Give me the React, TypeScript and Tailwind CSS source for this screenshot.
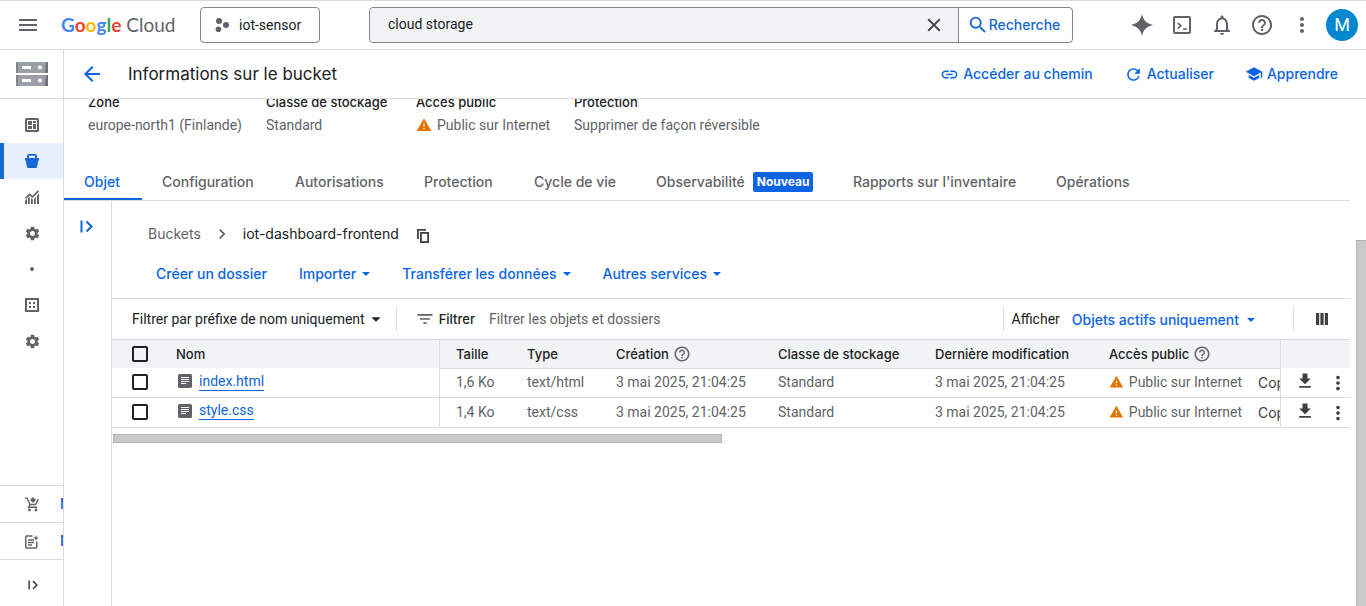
import type { ReactNode } from "react";
import {
  MdArrowBack,
  MdArrowDropDown,
  MdChevronRight,
  MdClose,
  MdDownload,
  MdFilterList,
  MdHelpOutline,
  MdLink,
  MdMenu,
  MdMoreVert,
  MdOutlineNotifications,
  MdRefresh,
  MdSchool,
  MdSearch,
  MdSettings,
  MdWarning,
} from "react-icons/md";

const body = "font-[Roboto,sans-serif]";

function ProjectIcon() {
  return (
    <svg width="14" height="14" viewBox="0 0 14 14" fill="#5f6368" aria-hidden="true">
      <circle cx="4" cy="3" r="3" />
      <circle cx="11" cy="7" r="3" />
      <circle cx="3.4" cy="11.2" r="2.8" />
    </svg>
  );
}

function StorageIcon() {
  return (
    <svg width="32" height="24" viewBox="0 0 32 24" aria-hidden="true">
      <path fill="#9aa0a6" d="M0 0h32v11H0zM0 13h32v11H0z" />
      <path fill="#80868b" d="M0 0h2v11H0zM0 13h2v11H0z" />
      <path fill="#6d7278" d="M30 0h2v11h-3zM30 13h2v11h-3z" />
      <path fill="#fff" d="M6 4h9v3H6zM6 17h9v3H6z" />
      <circle cx="24" cy="5.5" r="2" fill="#fff" />
      <circle cx="24" cy="18.5" r="2" fill="#fff" />
    </svg>
  );
}

function OverviewIcon() {
  return (
    <svg width="14" height="14" viewBox="0 0 14 14" aria-hidden="true">
      <rect x="1" y="1" width="12" height="12" fill="none" stroke="#5f6368" strokeWidth="2" rx=".5" />
      <path fill="#5f6368" d="M3 3h4v4H3zM8 3h3v2H8zM3 8h4v3H3zM8 6h3v5H8z" />
    </svg>
  );
}

function BucketIcon() {
  return (
    <svg width="14" height="14" viewBox="0 0 14 14" fill="#1967d2" aria-hidden="true">
      <path
        fillRule="evenodd"
        d="M4 0h6a2 2 0 0 1 2 2v2h2v2.500h-.6L12 13a1 1 0 0 1-1 1H3a1 1 0 0 1-1-1L.6 6.500H0V4h2V2a2 2 0 0 1 2-2zm0 1.800V4h6V1.800z"
      />
    </svg>
  );
}

function MonitoringIcon() {
  return (
    <svg width="14" height="14" viewBox="0 0 14 14" aria-hidden="true">
      <path fill="none" stroke="#5f6368" strokeWidth="1.700" d="M.5 8.500l4-4.200 3 2.500L13.500 .8" />
      <path fill="#5f6368" d="M0 11l2-2v5H0zM3 8l1.800-1.500V14H3zM6 8l1.800 1.300V14H6zM9 9l1.800-2V14H9zM12 5.500l2-2V14h-2z" />
    </svg>
  );
}

function ConfigurationIcon() {
  return (
    <svg width="14" height="14" viewBox="0 0 14 14" aria-hidden="true">
      <rect x="1" y="1" width="12" height="12" fill="none" stroke="#5f6368" strokeWidth="2" />
      <path fill="#5f6368" d="M4 4h2v2H4zM8 4h2v2H8zM4 8h2v2H4zM8 8h2v2H8z" />
    </svg>
  );
}

function MarketplaceIcon() {
  return (
    <svg width="14" height="15" viewBox="0 0 14 15" className="shrink-0" aria-hidden="true">
      <path fill="#5f6368" d="M8 0l3 3-3 3-3-3z" />
      <path
        fill="none"
        stroke="#5f6368"
        strokeWidth="1.400"
        d="M0 1.200h2l3 6.300h5.500L13.300 2M5 7.500l-1.400 2.700h8.600"
      />
      <circle cx="4.500" cy="13" r="1.400" fill="#5f6368" />
      <circle cx="11" cy="13" r="1.400" fill="#5f6368" />
    </svg>
  );
}

function ReleaseNotesIcon() {
  return (
    <svg width="14" height="15" viewBox="0 0 14 15" className="shrink-0" aria-hidden="true">
      <path
        fill="none"
        stroke="#5f6368"
        strokeWidth="1.500"
        d="M7.500 2H1.800A1 1 0 0 0 .8 3v10a1 1 0 0 0 1 1h9a1 1 0 0 0 1-1V7.500M3 6h6M3 8.500h6M3 11h4"
      />
      <path fill="#5f6368" d="M11 1l.8 2.200L14 4l-2.200.8L11 7l-.8-2.200L8 4l2.200-.8z" />
    </svg>
  );
}

function ExpandIcon({ size, color }: { size: number; color: string }) {
  return (
    <svg width={size} height={size} viewBox="0 0 13 13" fill="none" stroke={color} strokeWidth="2" aria-hidden="true">
      <path d="M1.500 .5v12M6.500 1.500l5 5-5 5" />
    </svg>
  );
}

function CopyIcon() {
  return (
    <svg width="12" height="14" viewBox="0 0 12 14" fill="none" stroke="#3c4043" aria-hidden="true">
      <path strokeWidth="1.800" d="M.9 10V.9H9" />
      <rect x="3.900" y="3.900" width="7.200" height="9.200" strokeWidth="1.800" />
    </svg>
  );
}

function SparkIcon() {
  return (
    <svg width="22" height="22" viewBox="0 0 22 22" fill="#5f6368" aria-hidden="true">
      <path d="M11 0c1.500 6.500 4.500 9.500 11 11-6.500 1.500-9.500 4.500-11 11-1.500-6.500-4.500-9.500-11-11C6.500 9.500 9.500 6.500 11 0z" />
    </svg>
  );
}

function ShellIcon() {
  return (
    <svg width="18" height="18" viewBox="0 0 18 18" fill="none" stroke="#5f6368" aria-hidden="true">
      <rect x="1" y="1" width="16" height="16" rx="1" strokeWidth="2" />
      <path strokeWidth="1.700" d="M4.800 7l3 2.800-3 2.800M10 13h4" />
    </svg>
  );
}

function FileIcon() {
  return (
    <svg width="14" height="14" viewBox="0 0 14 14" aria-hidden="true">
      <rect width="14" height="14" rx="1.500" fill="#5f6368" />
      <path stroke="#fff" d="M3 3.500h8M3 5.500h8M3 7.500h8M3 9.500h5" />
    </svg>
  );
}

function ColumnsIcon() {
  return (
    <svg width="12" height="12" viewBox="0 0 12 12" fill="#3c4043" aria-hidden="true">
      <path d="M0 0h3.200v12H0zM4.400 0h3.200v12H4.400zM8.800 0H12v12H8.800z" />
    </svg>
  );
}

function Caret() {
  return (
    <svg width="8" height="4" viewBox="0 0 8 4" fill="currentColor" aria-hidden="true">
      <path d="M0 0h8L4 4z" />
    </svg>
  );
}

const navItems: { id: string; icon: ReactNode; active?: boolean }[] = [
  { id: "overview", icon: <OverviewIcon /> },
  { id: "buckets", icon: <BucketIcon />, active: true },
  { id: "monitoring", icon: <MonitoringIcon /> },
  { id: "settings", icon: <MdSettings size={17} /> },
  { id: "section", icon: <span className="size-1 rounded-full bg-[#5f6368]" /> },
  { id: "configuration", icon: <ConfigurationIcon /> },
  { id: "preferences", icon: <MdSettings size={17} /> },
];

function Header() {
  return (
    <header className="flex h-[50px] shrink-0 items-center border-y border-[#dadce0] pr-2">
      <button className="flex w-14 justify-center text-[#5f6368]">
        <MdMenu size={24} />
      </button>
      <a href="#" className="ml-[5px] w-[139px] font-[Lato,sans-serif] text-[19px] leading-6 whitespace-nowrap">
        <span className="font-bold">
          <span className="text-[#4285f4]">G</span>
          <span className="text-[#ea4335]">o</span>
          <span className="text-[#fbbc04]">o</span>
          <span className="text-[#4285f4]">g</span>
          <span className="text-[#34a853]">l</span>
          <span className="text-[#ea4335]">e</span>
        </span>
        <span className="text-[#5f6368]"> Cloud</span>
      </a>
      <button className="flex h-9 w-[120px] items-center gap-2.5 rounded border border-[#80868b] pl-3.5 text-sm text-[#202124]">
        <ProjectIcon />
        <span className={body}>iot-sensor</span>
      </button>
      <form className="ml-[49px] flex h-9 w-[704px] items-stretch rounded border border-[#80868b]">
        <div className="flex flex-1 items-center rounded-l bg-[#f1f3f4] pr-[13px]">
          <input
            type="text"
            aria-label="Recherche"
            defaultValue="cloud storage"
            className="min-w-0 flex-1 bg-transparent pb-0.5 pl-[18px] font-[Roboto,sans-serif] text-sm text-[#202124] outline-none"
          />
          <button type="button" className="text-[#3c4043]">
            <MdClose size={22} />
          </button>
        </div>
        <button
          type="button"
          className="flex w-[114px] items-center justify-center border-l border-[#80868b] pr-1 text-sm font-medium text-[#1967d2]"
        >
          <MdSearch size={22} />
          Recherche
        </button>
      </form>
      <div className="ml-auto flex items-center text-[#5f6368]">
        <button className="flex w-10 justify-center"><SparkIcon /></button>
        <button className="flex w-10 justify-center"><ShellIcon /></button>
        <button className="flex w-10 justify-center"><MdOutlineNotifications size={24} /></button>
        <button className="flex w-10 justify-center"><MdHelpOutline size={24} /></button>
        <button className="flex w-10 justify-center"><MdMoreVert size={24} /></button>
        <button className="ml-1 flex size-8 items-center justify-center rounded-full bg-[#0288d1] font-[Roboto,sans-serif] text-lg text-white">
          M
        </button>
      </div>
    </header>
  );
}

function Sidebar() {
  const footer =
    "flex h-[37px] items-center gap-[21px] border-t border-[#dadce0] pl-[25px] text-sm font-medium text-[#0b57d0]";
  return (
    <aside className="flex w-16 shrink-0 flex-col overflow-hidden border-r border-[#dadce0] text-[#5f6368]">
      <div className="flex h-[49px] shrink-0 items-center border-b border-[#dadce0] pl-4">
        <StorageIcon />
      </div>
      <nav className="pt-2">
        {navItems.map((item) => (
          <a
            key={item.id}
            href="#"
            className={
              item.active
                ? "flex h-9 items-center justify-center border-l-4 border-[#1967d2] bg-[#e8f0fe] pr-[3px]"
                : "flex h-9 items-center justify-center pl-px"
            }
          >
            {item.icon}
          </a>
        ))}
      </nav>
      <div className="mt-auto">
        <a href="#" className={footer}>
          <MarketplaceIcon />
          <span>M</span>
        </a>
        <a href="#" className={footer}>
          <ReleaseNotesIcon />
          <span>N</span>
        </a>
        <button className="flex h-[47px] w-full items-center border-t border-[#dadce0] pt-1 pl-7">
          <ExpandIcon size={10} color="#3c4043" />
        </button>
      </div>
    </aside>
  );
}

function TitleBar() {
  const action = "flex items-center gap-1 text-sm font-medium text-[#0b65e3]";
  return (
    <div className="flex h-[49px] shrink-0 items-center border-b border-[#dadce0] pr-7 pl-4">
      <button className="text-[#0b65e3]">
        <MdArrowBack size={24} />
      </button>
      <h1 className="ml-6 text-[17px] leading-6 text-[#202124]">Informations sur le bucket</h1>
      <div className="ml-auto flex items-center gap-[31px]">
        <button className={action}><MdLink size={19} />Accéder au chemin</button>
        <button className={action}><MdRefresh size={19} />Actualiser</button>
        <button className={action}><MdSchool size={18} />Apprendre</button>
      </div>
    </div>
  );
}

function Warning() {
  return (
    <span className="flex items-center gap-[5px] whitespace-nowrap">
      <MdWarning size={16} className="text-[#e37400]" />
      Public sur Internet
    </span>
  );
}

const facts: { label: string; value: ReactNode; width: string }[] = [
  { label: "Zone", value: "europe-north1 (Finlande)", width: "w-[178px]" },
  { label: "Classe de stockage", value: "Standard", width: "w-[150px]" },
  { label: "Accès public", value: <Warning />, width: "w-[158px]" },
  { label: "Protection", value: "Supprimer de façon réversible", width: "w-60" },
];

const tabs = [
  { label: "Objet", width: "w-[78px]" },
  { label: "Configuration", width: "w-[133px]" },
  { label: "Autorisations", width: "w-[129px]" },
  { label: "Protection", width: "w-[110px]" },
  { label: "Cycle de vie", width: "w-[122px]" },
  { label: "Observabilité", width: "w-[197px]", badge: "Nouveau" },
  { label: "Rapports sur l'inventaire", width: "w-[203px]" },
  { label: "Opérations", width: "w-[116px]" },
];

const files = [
  { name: "index.html", size: "1,6 Ko", type: "text/html" },
  { name: "style.css", size: "1,4 Ko", type: "text/css" },
];
const date = "3 mai 2025, 21:04:25";

function Checkbox({ label }: { label: string }) {
  return (
    <input
      type="checkbox"
      aria-label={label}
      className="block size-4 appearance-none rounded-xs border-2 border-[#202124]"
    />
  );
}

function HelpIcon() {
  return <MdHelpOutline size={18} className="text-[#5f6368]" />;
}

function ObjectsTable() {
  const head = "border-b border-[#dadce0] bg-[#f1f3f4] pl-4 text-left font-medium whitespace-nowrap";
  const edgeHead = "border-b border-b-white bg-[#f1f3f4] text-left font-medium";
  const cell = "border-b border-[#dadce0] pb-0.5 pl-4 whitespace-nowrap";
  return (
    <table className="w-full table-fixed border-separate border-spacing-0 border-t border-[#dadce0] text-sm leading-5">
      <colgroup>
        <col className="w-[52px]" />
        <col />
        <col className="w-[71px]" />
        <col className="w-[89px]" />
        <col className="w-[162px]" />
        <col className="w-[157px]" />
        <col className="w-[174px]" />
        <col className="w-[149px]" />
        <col className="w-[39px]" />
        <col className="w-[69px]" />
      </colgroup>
      <thead className="text-[13px] text-[#202124]">
        <tr className="h-[29px]">
          <th className={`${edgeHead} pl-5`}><Checkbox label="Tout" /></th>
          <th className={`${edgeHead} border-r border-r-[#dadce0] pl-3`}>Nom</th>
          <th className={head}>Taille</th>
          <th className={head}>Type</th>
          <th className={head}>
            <span className="flex items-center gap-1">Création <HelpIcon /></span>
          </th>
          <th className={head}>Classe de stockage</th>
          <th className={head}>Dernière modification</th>
          <th className={head}>
            <span className="flex items-center gap-1">Accès public <HelpIcon /></span>
          </th>
          <th className={`${head} border-r`} />
          <th className={edgeHead} />
        </tr>
      </thead>
      <tbody className="font-[Roboto,sans-serif] text-[#5f6368]">
        {files.map((f) => (
          <tr key={f.name} className="h-[29px] last:h-[30px]">
            <td className="border-b border-[#dadce0] pb-0.5 pl-5"><Checkbox label={f.name} /></td>
            <td className="border-r border-b border-[#dadce0] pb-1 pl-3.5">
              <span className="flex items-center gap-[7px]">
                <FileIcon />
                <a href="#" className="border-b border-[#0b65e3] leading-[18px] text-[#0b65e3]">{f.name}</a>
              </span>
            </td>
            <td className={cell}>{f.size}</td>
            <td className={cell}>{f.type}</td>
            <td className={cell}>{date}</td>
            <td className={cell}>Standard</td>
            <td className={cell}>{date}</td>
            <td className={cell}><Warning /></td>
            <td className="overflow-hidden border-r border-b border-[#dadce0] pl-4 font-[Inter,sans-serif] text-[#3c4043]">Cop</td>
            <td className="border-b border-[#dadce0] pl-3.5 text-[#3c4043]">
              <span className="flex items-center gap-3">
                <button className="pb-1"><MdDownload size={20} className="block" /></button>
                <button><MdMoreVert size={22} className="block" /></button>
              </span>
            </td>
          </tr>
        ))}
      </tbody>
    </table>
  );
}

function MenuButton({ label, menu }: { label: string; menu?: boolean }) {
  return (
    <button className="flex items-center gap-1.5 text-sm leading-5 font-medium text-[#0b65e3]">
      {label}
      {menu && <Caret />}
    </button>
  );
}

function Browser() {
  return (
    <div className="flex min-h-0 flex-1">
      <div className="w-[47px] shrink-0 pt-[19px] pl-4">
        <button className="block"><ExpandIcon size={13} color="#0b65e3" /></button>
      </div>
      <section className="min-w-0 flex-1 border-l border-[#dadce0]">
        <nav className="flex h-[63px] items-center pt-0.5 pl-9 text-sm">
          <a href="#" className="text-[#5f6368]">Buckets</a>
          <MdChevronRight size={20} className="mx-[11px] text-[#5f6368]" />
          <span className="text-[#202124]">iot-dashboard-frontend</span>
          <button className="mt-1 ml-[18px]"><CopyIcon /></button>
        </nav>
        <div className="flex h-[34px] items-start gap-8 pl-11">
          <MenuButton label="Créer un dossier" />
          <MenuButton label="Importer" menu />
          <MenuButton label="Transférer les données" menu />
          <MenuButton label="Autres services" menu />
        </div>
        <div className="flex h-[41px] items-center border-t border-[#dadce0] pl-5 text-sm text-[#202124]">
          <button className="flex items-center font-[Roboto,sans-serif]">
            Filtrer par préfixe de nom uniquement
            <MdArrowDropDown size={22} />
          </button>
          <label htmlFor="filter" className="ml-[9px] flex h-6 items-center gap-1 border-l border-[#dadce0] pl-[18px] text-[13px] font-medium">
            <MdFilterList size={20} className="text-[#5f6368]" />
            Filtrer
          </label>
          <input
            id="filter"
            type="text"
            placeholder="Filtrer les objets et dossiers"
            className="ml-3.5 min-w-0 flex-1 font-[Roboto,sans-serif] outline-none placeholder:text-[#5f6368]"
          />
          <div className="flex h-6 items-center border-l border-[#dadce0] pl-2">
            <span className={body}>Afficher</span>
            <button className="ml-3 flex items-center gap-2 pt-0.5 font-medium text-[#0b65e3]">
              Objets actifs uniquement
              <Caret />
            </button>
          </div>
          <div className="ml-[38px] flex h-6 items-center border-l border-[#dadce0] px-[22px]">
            <button><ColumnsIcon /></button>
          </div>
        </div>
        <ObjectsTable />
        <div className="mt-1.5 ml-px h-[9px] w-[609px] border border-[#b5b5b5] bg-[#c9c9c9]" />
      </section>
    </div>
  );
}

export default function App() {
  return (
    <div className="flex h-screen flex-col overflow-hidden bg-white font-[Inter,sans-serif]">
      <Header />
      <div className="flex min-h-0 flex-1">
        <Sidebar />
        <main className="flex min-w-0 flex-1 flex-col">
          <TitleBar />
          <div className="flex min-h-0 flex-1">
            <div className="flex min-w-0 flex-1 flex-col overflow-hidden">
              <dl className="-mt-[7px] flex h-[72px] shrink-0 pl-6 text-sm leading-5">
                {facts.map((f) => (
                  <div key={f.label} className={`${f.width} shrink-0`}>
                    <dt className="text-[13px] font-medium text-[#202124]">{f.label}</dt>
                    <dd className="mt-[3px] font-[Roboto,sans-serif] text-[#5f6368]">{f.value}</dd>
                  </div>
                ))}
              </dl>
              <nav className="flex h-[37px] shrink-0 border-b border-[#dadce0] text-sm font-medium">
                {tabs.map((t, i) => (
                  <a
                    key={t.label}
                    href="#"
                    className={`${t.width} flex shrink-0 items-center gap-2 border-b-2 pt-0.5 pl-5 whitespace-nowrap ${
                      i === 0 ? "border-[#0b65e3] text-[#0b65e3]" : "border-transparent text-[#5f6368]"
                    }`}
                  >
                    {t.label}
                    {t.badge && (
                      <span className="rounded-xs bg-[#0b65e3] px-1 text-xs leading-5 font-bold text-white">{t.badge}</span>
                    )}
                  </a>
                ))}
              </nav>
              <Browser />
            </div>
            <div className="flex w-4 shrink-0 justify-end pt-[141px]">
              <div className="w-2.5 border-t border-l border-[#b5b5b5] bg-[#c9c9c9]" />
            </div>
          </div>
        </main>
      </div>
    </div>
  );
}
